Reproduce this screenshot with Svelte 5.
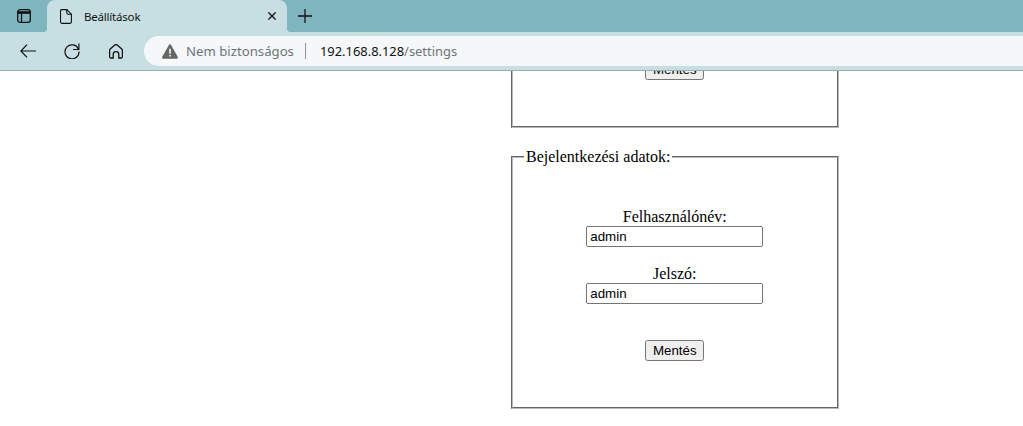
<script>
    const fields = [
        { label: "Felhasználónév:", value: "admin" },
        { label: "Jelszó:", value: "admin" }
    ];
</script>

<div class="window">
    <div class="tabstrip">
        <button class="strip-btn" aria-label="Lapműveletek">
            <svg width="14" height="14" viewBox="0 0 14 14" fill="none" stroke="#111" stroke-width="1.300">
                <rect x=".7" y=".7" width="12.600" height="12.600" rx="2.200" />
                <path d="M.7 3.500h12.600" stroke-width="2.600" />
                <path d="M4.500 4v9.500" />
            </svg>
        </button>
        <div class="tab">
            <svg class="doc" width="12" height="15" viewBox="0 0 12 15" fill="none" stroke="#111" stroke-width="1.100">
                <path d="M2 .6h4.800L11.400 5.200v7.700a1.500 1.500 0 0 1-1.500 1.500H2a1.500 1.500 0 0 1-1.500-1.500V2.100A1.500 1.500 0 0 1 2 .6z" />
                <path d="M6.800.6v3.200a1.400 1.400 0 0 0 1.400 1.400h3.200" />
            </svg>
            <span class="tab-title">Beállítások</span>
            <svg class="close" width="8" height="8" viewBox="0 0 8 8" stroke="#111" stroke-width="1.300">
                <path d="M.4.4l7.200 7.200M7.600.4L.4 7.600" />
            </svg>
        </div>
        <button class="strip-btn plus" aria-label="Új lap">
            <svg width="14" height="14" viewBox="0 0 14 14" stroke="#111" stroke-width="1.300">
                <path d="M7 0v14M0 7h14" />
            </svg>
        </button>
    </div>

    <div class="toolbar">
        <button class="nav" aria-label="Vissza">
            <svg width="16" height="14" viewBox="0 0 16 14" fill="none" stroke="#111" stroke-width="1.200">
                <path d="M16 7H1M7 .6L.9 7 7 13.400" />
            </svg>
        </button>
        <button class="nav" aria-label="Frissítés">
            <svg width="16" height="16" viewBox="0 0 16 16" fill="none" stroke="#111" stroke-width="1.200">
                <path d="M14.500 6.200A7 7 0 1 0 15 8.500" />
                <path d="M14.900.6v5.900H9" />
            </svg>
        </button>
        <button class="nav" aria-label="Kezdőlap">
            <svg width="14" height="15" viewBox="0 0 14 15" fill="none" stroke="#111" stroke-width="1.300">
                <path d="M5.800 1.100a1.800 1.800 0 0 1 2.400 0l4.600 4c.4.300.6.800.6 1.300v6.300c0 .7-.6 1.300-1.300 1.300H9.800v-3.600a2.800 2.800 0 0 0-5.600 0V14H1.900c-.7 0-1.300-.6-1.300-1.300V6.400c0-.5.200-1 .6-1.300z" />
            </svg>
        </button>
        <div class="address">
            <svg width="16" height="15" viewBox="0 0 16 15">
                <path d="M8 .3c.5 0 .9.300 1.100.7l6.600 11.800c.5.900-.1 2-1.100 2H1.400c-1 0-1.600-1.100-1.100-2L6.900 1c.2-.4.600-.7 1.100-.7z" fill="#666" />
                <path d="M7.200 4.800h1.600v5H7.200zM7.200 10.900h1.600v1.600H7.200z" fill="#f5f8f9" />
            </svg>
            <span class="security">Nem biztonságos</span>
            <span class="divider"></span>
            <span class="url">192.168.8.128<span class="path">/settings</span></span>
        </div>
    </div>

    <div class="page">
        <fieldset>
            <div class="form-body">
                <button type="button">Mentés</button>
            </div>
        </fieldset>

        <fieldset class="login">
            <legend>Bejelentkezési adatok:</legend>
            <form class="form-body" onsubmit={(e) => e.preventDefault()}>
                {#each fields as f}
                    <label>
                        {f.label}<br />
                        <input type="text" value={f.value} />
                    </label>
                {/each}
                <button type="submit">Mentés</button>
            </form>
        </fieldset>
    </div>
</div>

<style>
    :global(body) {
        margin: 0;
        overflow: hidden;
    }

    .window {
        height: 426px;
        display: flex;
        flex-direction: column;
        background: #fff;
    }

    .tabstrip {
        height: 32px;
        flex: none;
        background: #7fb5be;
        display: flex;
        align-items: stretch;
    }

    .strip-btn {
        width: 47px;
        border: none;
        background: none;
        padding: 0;
        display: flex;
        align-items: center;
        justify-content: center;
    }

    .strip-btn.plus {
        width: 36px;
    }

    .tab {
        position: relative;
        width: 240px;
        background: #c7dfe3;
        border-radius: 8px 8px 0 0;
        display: flex;
        align-items: center;
        padding: 0 11px 0 13px;
        box-sizing: border-box;
    }

    /* small flared corners where the tab meets the toolbar */
    .tab::before,
    .tab::after {
        content: "";
        position: absolute;
        bottom: 0;
        width: 4px;
        height: 4px;
    }

    .tab::before {
        left: -4px;
        background: radial-gradient(circle at 0 0, transparent 4px, #c7dfe3 4.500px);
    }

    .tab::after {
        right: -4px;
        background: radial-gradient(circle at 100% 0, transparent 4px, #c7dfe3 4.500px);
    }

    .doc {
        margin-right: 12px;
    }

    .tab-title {
        flex: 1;
        font: 11.500px "Noto Sans", sans-serif;
        letter-spacing: -0.2px;
        color: #111;
    }

    .toolbar {
        height: 38px;
        flex: none;
        background: #c7dfe3;
        border-bottom: 1px solid #9bb0b5;
        display: flex;
        align-items: center;
        padding: 0 0 0 6px;
    }

    .nav {
        width: 44px;
        height: 30px;
        border: none;
        background: none;
        padding: 0;
        display: flex;
        align-items: center;
        justify-content: center;
    }

    .address {
        flex: 1;
        height: 30px;
        margin-left: 6px;
        background: #f5f8f9;
        border-radius: 15px 0 0 15px;
        display: flex;
        align-items: center;
        padding-left: 18px;
        font: 12.900px "Noto Sans", sans-serif;
    }

    .security {
        margin-left: 8px;
        width: 108px;
        white-space: nowrap;
        font-size: 13.200px;
        color: #6d7478;
    }

    .divider {
        width: 1px;
        height: 16px;
        background: #8a9094;
        margin: 0 14px 0 11px;
    }

    .url {
        color: #111;
    }

    .path {
        color: #6d7478;
    }

    .page {
        flex: 1;
        min-height: 0;
        overflow: hidden;
        display: flex;
        flex-direction: column;
        justify-content: flex-end;
        align-items: flex-start;
        padding: 0 0 17px 511px;
        font: 16px "Liberation Serif", serif;
        color: #000;
    }

    fieldset {
        width: 327.500px;
        box-sizing: border-box;
        margin: 0;
        flex: none;
        border: 2px groove #b8b8b8;
    }

    legend {
        margin-left: -1px;
    }

    .login {
        margin-top: 20px;
    }

    .form-body {
        display: flex;
        flex-direction: column;
        align-items: center;
        text-align: center;
        padding: 36px 0 36px;
    }

    label {
        display: block;
        margin-bottom: 18px;
    }

    input {
        width: 177px;
        height: 21px;
        box-sizing: border-box;
        font: 13.333px "Liberation Sans", sans-serif;
    }

    button[type] {
        margin-top: 18px;
        width: 59px;
        padding: 0;
        font: 13.333px "Liberation Sans", sans-serif;
        height: 21px;
    }
</style>
